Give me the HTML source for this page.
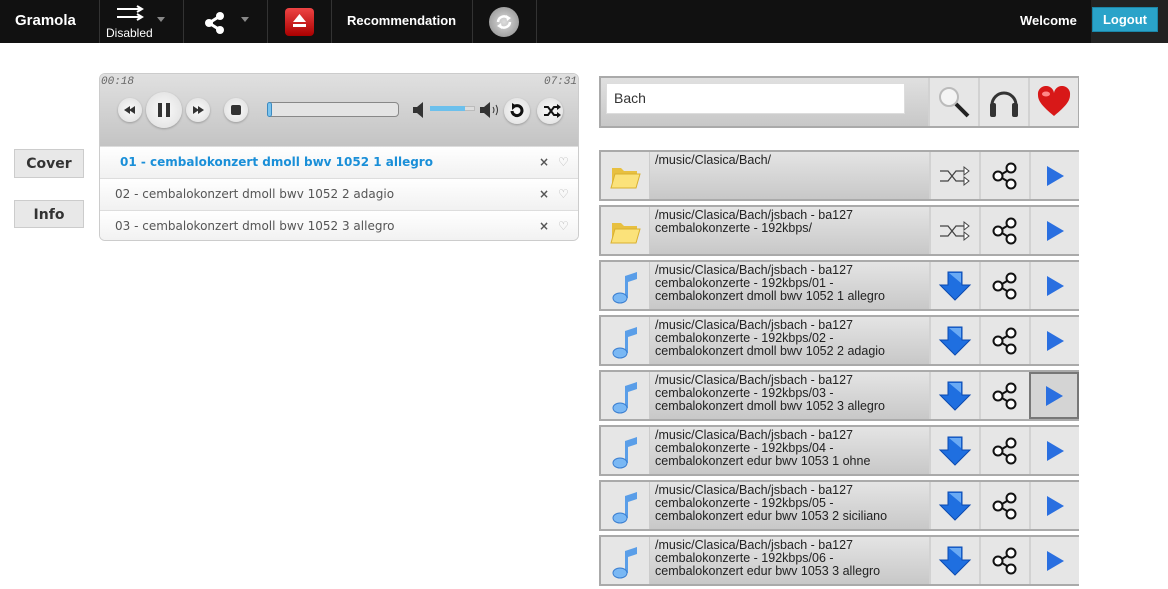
<!DOCTYPE html>
<html><head><meta charset="utf-8">
<style>
*{box-sizing:border-box;margin:0;padding:0}
body{width:1168px;height:589px;background:#fff;font-family:"Liberation Sans",sans-serif;position:relative;overflow:hidden}
.a{position:absolute}
.nav{left:0;top:0;width:1168px;height:43px;background:#111}
.sep{top:0;width:1px;height:43px;background:#333}
.nt{color:#fff;font-weight:bold;font-size:13px}
.btn{background:#e8e8e8;border:1px solid #ccc;font-weight:bold;font-size:14px;color:#333;text-align:center;font-family:"DejaVu Sans",sans-serif}
.pl{left:99px;top:73px;width:480px;height:168px;border:1px solid #ccc;border-radius:6px;overflow:hidden}
.ph{left:0;top:0;width:480px;height:72px;background:linear-gradient(#e0e0e0,#c4c4c4)}
.tr{left:0;width:480px;height:32px;border-top:1px solid #ddd;background:linear-gradient(#fff,#f1f1f1);font-family:"DejaVu Sans",sans-serif;font-size:12px;color:#555;line-height:30px}
.tr .x{position:absolute;left:439px;font-weight:bold;color:#555}
.tr .h{position:absolute;left:458px;color:#aaa}
.cb{border-radius:50%;background:radial-gradient(#fafafa,#ddd);box-shadow:0 1px 2px #999}
.row{left:599px;width:480px;height:51px;border:2px solid #aaa;background:#ddd}
.ic{position:absolute;top:0;width:49px;height:47px;background:#e6e6e6;border-right:1px solid #ccc}
.tx{position:absolute;left:49px;top:0;width:279px;height:47px;background:linear-gradient(#e4e4e4,#c8c8c8);font-size:12.5px;line-height:13px;color:#222;padding:2px 0 0 5px}
.b{position:absolute;top:0;width:50px;height:47px;background:#e6e6e6;border-left:2px solid #d2d2d2;display:flex;align-items:center;justify-content:center}
.tm{font-size:11px;font-style:italic;color:#666;font-family:'Liberation Mono',monospace;top:2px}
</style></head><body>
<div class="a nav"></div>
<div class="a nt" style="left:15px;top:12px;font-size:15px">Gramola</div>
<div class="a sep" style="left:99px"></div><div class="a sep" style="left:183px"></div><div class="a sep" style="left:267px"></div><div class="a sep" style="left:331px"></div><div class="a sep" style="left:472px"></div><div class="a sep" style="left:536px"></div>
<svg class="a" style="left:116px;top:5px" width="30" height="16"><path d="M1 4H26M21 1l5 3-5 3M1 12H26M21 9l5 3-5 3" stroke="#fff" stroke-width="2" fill="none"/></svg>
<div class="a" style="left:157px;top:17px;border:4px solid transparent;border-top:5px solid #888"></div>
<div class="a" style="left:106px;top:26px;color:#fff;font-size:12px">Disabled</div>
<svg class="a" style="left:204px;top:12px" width="22" height="22"><circle cx="5" cy="11" r="4" fill="#fff"/><circle cx="16" cy="4" r="4" fill="#fff"/><circle cx="16" cy="18" r="4" fill="#fff"/><path d="M5 11L16 4M5 11L16 18" stroke="#fff" stroke-width="3"/></svg>
<div class="a" style="left:241px;top:17px;border:4px solid transparent;border-top:5px solid #888"></div>
<div class="a" style="left:285px;top:8px;width:29px;height:28px;border-radius:4px;background:linear-gradient(#e44,#a00)"></div>
<svg class="a" style="left:291px;top:13px" width="17" height="17"><path d="M8.5 1L15 9H2Z" fill="#fff"/><rect x="2" y="11" width="13" height="3" fill="#fff"/></svg>
<div class="a nt" style="left:347px;top:13px">Recommendation</div>
<div class="a" style="left:489px;top:7px;width:30px;height:30px;border-radius:50%;background:radial-gradient(#ddd,#888)"></div>
<svg class="a" style="left:494px;top:12px" width="20" height="20"><path d="M4 10a6 6 0 0 1 10-4M16 10a6 6 0 0 1-10 4" stroke="#fff" stroke-width="2.5" fill="none"/><path d="M12 3l5 3-4 3zM8 17l-5-3 4-3z" fill="#fff"/></svg>
<div class="a" style="left:1091px;top:0;width:77px;height:43px;background:#222"></div>
<div class="a nt" style="left:1020px;top:13px">Welcome</div>
<div class="a" style="left:1092px;top:7px;width:66px;height:25px;background:#2aa3c9;border:1px solid #1b86a8;color:#fff;font-weight:bold;font-size:13px;text-align:center;line-height:23px">Logout</div>

<div class="a btn" style="left:14px;top:149px;width:70px;height:29px;line-height:29px">Cover</div>
<div class="a btn" style="left:14px;top:200px;width:70px;height:28px;line-height:28px">Info</div>

<div class="a pl">
<div class="a ph"></div>
<div class="a tm" style="left:1px">00:18</div>
<div class="a tm" style="right:1px">07:31</div>
<div class="a cb" style="left:18px;top:24px;width:24px;height:24px"></div>
<div class="a cb" style="left:46px;top:18px;width:36px;height:36px"></div>
<div class="a cb" style="left:86px;top:24px;width:24px;height:24px"></div>
<div class="a cb" style="left:124px;top:24px;width:24px;height:24px"></div>
<svg class="a" style="left:18px;top:24px" width="130" height="24"><path d="M6 12l6-4v8zM11 12l6-4v8z" fill="#333"/><rect x="40" y="5" width="4" height="14" fill="#333"/><rect x="48" y="5" width="4" height="14" fill="#333"/><path d="M75 8l6 4-6 4zM80 8l6 4-6 4z" fill="#333"/><rect x="113" y="7" width="10" height="10" rx="2" fill="#333"/></svg>
<div class="a" style="left:167px;top:28px;width:132px;height:15px;border:1px solid #888;border-radius:4px;background:#e4e4e4"></div>
<div class="a" style="left:167px;top:28px;width:5px;height:15px;border:1px solid #3c8ac0;border-radius:3px;background:#7cc4ee"></div>
<svg class="a" style="left:312px;top:27px" width="92" height="18"><path d="M1 6h4l6-5v16l-6-5H1z" fill="#333"/><path d="M68 6h4l6-5v16l-6-5h-4z" fill="#333"/><path d="M81 6q2 3 0 6M84 4q3 5 0 10" stroke="#333" fill="none"/></svg>
<div class="a" style="left:330px;top:32px;width:45px;height:5px;background:#ddd;border:1px solid #bbb"></div>
<div class="a" style="left:330px;top:32px;width:35px;height:5px;background:#6cc0ec"></div>
<div class="a cb" style="left:404px;top:24px;width:26px;height:26px"></div>
<div class="a cb" style="left:437px;top:24px;width:26px;height:26px"></div>
<svg class="a" style="left:404px;top:24px" width="60" height="26"><path d="M8 13a5 5 0 1 0 3-5" stroke="#111" stroke-width="3" fill="none"/><path d="M8 5l5 3-5 4z" fill="#111"/><path d="M40 9h4l6 8h4M40 17h4l6-8h4" stroke="#111" stroke-width="2" fill="none"/><path d="M53 6l4 3-4 3zM53 14l4 3-4 3z" fill="#111"/></svg>
<div class="a tr" style="top:72px"><span style="position:absolute;left:20px;color:#1a8fd8;font-weight:bold">01 - cembalokonzert dmoll bwv 1052 1 allegro</span><span class="x">×</span><span class="h">♡</span></div>
<div class="a tr" style="top:104px"><span style="position:absolute;left:15px">02 - cembalokonzert dmoll bwv 1052 2 adagio</span><span class="x">×</span><span class="h">♡</span></div>
<div class="a tr" style="top:136px"><span style="position:absolute;left:15px">03 - cembalokonzert dmoll bwv 1052 3 allegro</span><span class="x">×</span><span class="h">♡</span></div>
</div>

<div class="a" style="left:599px;top:76px;width:480px;height:52px;border:2px solid #aaa;background:linear-gradient(#e0e0e0,#c8c8c8)"></div>
<div class="a" style="left:606px;top:83px;width:299px;height:31px;background:#fff;border:1px solid #ddd;font-size:14px;color:#333;padding:6px 0 0 7px">Bach</div>
<div class="a b" style="left:928px;top:78px;height:48px"><svg width="36" height="36"><circle cx="13" cy="13" r="9" fill="#f4f4f4" stroke="#bbb" stroke-width="2"/><path d="M20 20l12 12" stroke="#222" stroke-width="4"/></svg></div>
<div class="a b" style="left:978px;top:78px;height:48px"><svg width="34" height="34"><path d="M5 20a12 12 0 0 1 24 0" stroke="#333" stroke-width="3" fill="none"/><rect x="3" y="18" width="6" height="14" rx="2" fill="#333"/><rect x="25" y="18" width="6" height="14" rx="2" fill="#333"/></svg></div>
<div class="a b" style="left:1028px;top:78px;height:48px"><svg width="36" height="32"><path d="M18 30C6 20 2 15 2 9a8 8 0 0 1 16-2a8 8 0 0 1 16 2c0 6-4 11-16 21z" fill="#d81818"/><ellipse cx="10" cy="8" rx="4" ry="2.5" fill="#f88"/></svg></div>

<div id="rows"></div>
<script>
var d=[["/music/Clasica/Bach/",0],["/music/Clasica/Bach/jsbach - ba127<br>cembalokonzerte - 192kbps/",0]];
var t=[["01","dmoll bwv 1052 1 allegro"],["02","dmoll bwv 1052 2 adagio"],["03","dmoll bwv 1052 3 allegro"],["04","edur bwv 1053 1 ohne"],["05","edur bwv 1053 2 siciliano"],["06","edur bwv 1053 3 allegro"]];
t.forEach(function(x){d.push(["/music/Clasica/Bach/jsbach - ba127<br>cembalokonzerte - 192kbps/"+x[0]+" -<br>cembalokonzert "+x[1],1])});
var folder='<svg width="32" height="28"><path d="M3 6h9l3 3h13v16H3z" fill="#e8c040"/><path d="M6 12h25l-4 14H2z" fill="#fbe27a" stroke="#d9b030" stroke-width="1"/></svg>';
var note='<svg width="32" height="36"><path d="M16 30V8l12-4v7l-9 3v16" fill="#5a9ee8"/><ellipse cx="11" cy="30" rx="7" ry="5" fill="#7ab8f4" stroke="#3a7ed0"/></svg>';
var shuf='<svg width="34" height="26"><path d="M2 8h8l8 10h10M2 18h8l8-10h10" stroke="#444" stroke-width="1.3" fill="none"/><path d="M26 4l5 4-5 4zM26 14l5 4-5 4z" fill="#fff" stroke="#444"/></svg>';
var dn='<svg width="34" height="32"><path d="M10 2h14v13h8L17 30 2 15h8z" fill="#1f6fe0" stroke="#0b4ab0"/><path d="M11 3h12v10" fill="#6aaaf4"/></svg>';
var sh='<svg width="28" height="28"><circle cx="7" cy="14" r="4.5" fill="#fff" stroke="#111" stroke-width="2"/><circle cx="20" cy="6" r="4.5" fill="#fff" stroke="#111" stroke-width="2"/><circle cx="20" cy="22" r="4.5" fill="#fff" stroke="#111" stroke-width="2"/><path d="M11 12l5-3M11 16l5 3" stroke="#111" stroke-width="2"/></svg>';
var pl='<svg width="20" height="22"><path d="M2 1l17 10L2 21z" fill="#2a6fe0"/></svg>';
var h='';
d.forEach(function(r,i){var y=150+55*i;
h+='<div class="a row" style="top:'+y+'px"><div class="ic" style="display:flex;align-items:center;justify-content:center">'+(r[1]?note:folder)+'</div><div class="tx">'+r[0]+'</div><div class="b" style="left:328px">'+(r[1]?dn:shuf)+'</div><div class="b" style="left:378px">'+sh+'</div><div class="b" style="left:428px;'+(i==4?'background:#d4d4d4;border:2px solid #777':'')+'">'+pl+'</div></div>';});
document.getElementById('rows').innerHTML=h;
</script>
</body></html>
